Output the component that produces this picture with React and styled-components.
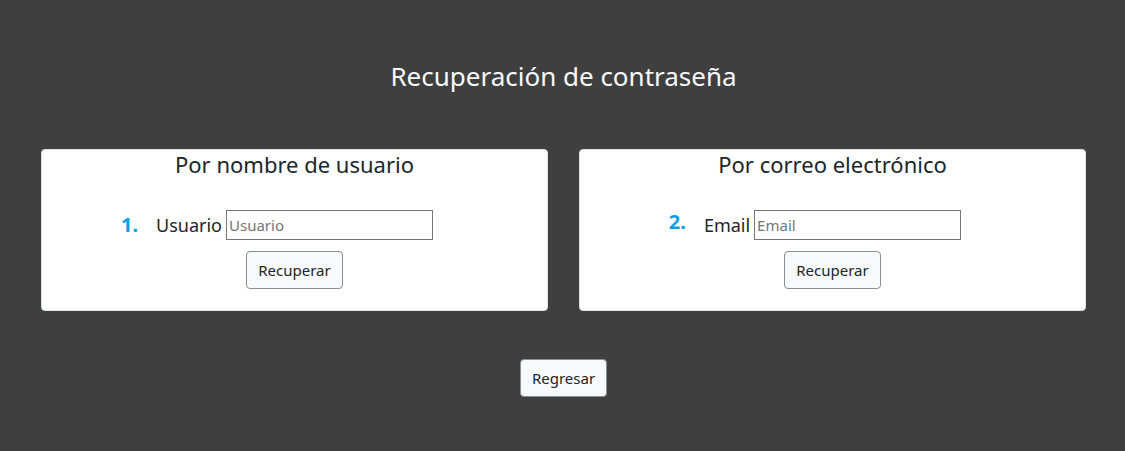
import React from "react";
import styled, { createGlobalStyle } from "styled-components";

const GlobalStyle = createGlobalStyle`
  html, body {
    margin: 0;
    padding: 0;
    background: #3f3f3f;
  }
  * {
    box-sizing: border-box;
  }
`;

const Page = styled.div`
  min-height: 100vh;
  padding: 61px 39px 0 41px;
  font-family: "Noto Sans", "Open Sans", sans-serif;
  color: #212529;
  display: flex;
  flex-direction: column;
  align-items: center;
`;

const Title = styled.h3`
  margin: 0;
  font-size: 26px;
  font-weight: 400;
  line-height: 1.2;
  color: #f8f9fa;
`;

const Cards = styled.div`
  width: 100%;
  margin-top: 57px;
  display: grid;
  grid-template-columns: 1fr 1fr;
  gap: 31px;
`;

const Card = styled.div`
  background: #fff;
  border: 1px solid #dee2e6;
  border-radius: 4px;
  padding: 0 16px 21px;
  display: flex;
  flex-direction: column;
  align-items: center;
`;

const CardTitle = styled.h4`
  margin: 0;
  font-size: 22px;
  font-weight: 400;
  line-height: 28px;
`;

const Row = styled.div`
  width: 100%;
  margin-top: 32px;
  display: grid;
  grid-template-columns: 1fr auto 1fr;
  align-items: center;
`;

const Step = styled.span`
  justify-self: end;
  margin-right: 18px;
  font-size: 20px;
  font-weight: 700;
  color: #0d9fe6;
  position: relative;
  top: ${(p) => p.$lift || 0}px;
`;

const Field = styled.label`
  display: flex;
  align-items: center;
  gap: 4px;
  font-size: 18px;
`;

const Input = styled.input`
  width: 207px;
  height: 30px;
  border: 1px solid #767676;
  border-radius: 0;
  padding: 1px 2px;
  font-family: inherit;
  font-size: 15px;
  &::placeholder {
    color: #757575;
  }
`;

const Button = styled.button`
  margin-top: ${(p) => p.$top || 0}px;
  height: 38px;
  padding: 0 11px;
  background: #f8f9fa;
  border: 1px solid #8a8f94;
  border-radius: 4px;
  font-family: inherit;
  font-size: 15px;
  color: #212529;
  cursor: pointer;
`;

const methods = [
  { title: "Por nombre de usuario", step: "1.", label: "Usuario", lift: -1 },
  { title: "Por correo electrónico", step: "2.", label: "Email", lift: -4 },
];

export default function App() {
  return (
    <>
      <GlobalStyle />
      <Page>
        <Title>Recuperación de contraseña</Title>
        <Cards>
          {methods.map((m) => (
            <Card key={m.step}>
              <CardTitle>{m.title}</CardTitle>
              <Row>
                <Step $lift={m.lift}>{m.step}</Step>
                <Field>
                  {m.label}
                  <Input placeholder={m.label} />
                </Field>
              </Row>
              <Button $top={11}>Recuperar</Button>
            </Card>
          ))}
        </Cards>
        <Button $top={48}>Regresar</Button>
      </Page>
    </>
  );
}
